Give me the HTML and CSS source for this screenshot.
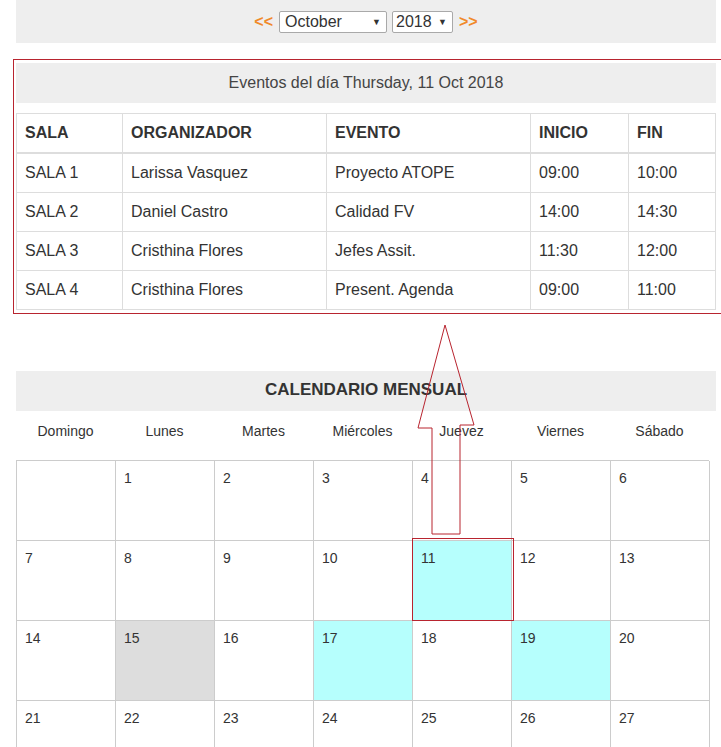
FILE: index.html
```html
<!DOCTYPE html>
<html lang="es">
<head>
<meta charset="utf-8">
<title>Calendario</title>
<link rel="stylesheet" href="styles.css">
</head>
<body>
<div class="page">
  <div class="nav">
    <a class="nav-arrow">&lt;&lt;</a>
    <div class="select month"><span>October</span><span class="caret">▼</span></div>
    <div class="select year"><span>2018</span><span class="caret">▼</span></div>
    <a class="nav-arrow">&gt;&gt;</a>
  </div>

  <section class="events">
    <div class="events-title">Eventos del día Thursday, 11 Oct 2018</div>
    <table class="events-table">
      <thead>
        <tr><th class="c1">SALA</th><th class="c2">ORGANIZADOR</th><th class="c3">EVENTO</th><th class="c4">INICIO</th><th class="c5">FIN</th></tr>
      </thead>
      <tbody>
        <tr><td>SALA 1</td><td>Larissa Vasquez</td><td>Proyecto ATOPE</td><td>09:00</td><td>10:00</td></tr>
        <tr><td>SALA 2</td><td>Daniel Castro</td><td>Calidad FV</td><td>14:00</td><td>14:30</td></tr>
        <tr><td>SALA 3</td><td>Cristhina Flores</td><td>Jefes Assit.</td><td>11:30</td><td>12:00</td></tr>
        <tr><td>SALA 4</td><td>Cristhina Flores</td><td>Present. Agenda</td><td>09:00</td><td>11:00</td></tr>
      </tbody>
    </table>
  </section>

  <section class="calendar">
    <div class="cal-title">CALENDARIO MENSUAL</div>
    <div class="weekdays">
      <div>Domingo</div><div>Lunes</div><div>Martes</div><div>Miércoles</div><div>Juevez</div><div>Viernes</div><div>Sábado</div>
    </div>
    <div class="grid">
      <div class="day"></div><div class="day">1</div><div class="day">2</div><div class="day">3</div><div class="day">4</div><div class="day">5</div><div class="day">6</div>
      <div class="day">7</div><div class="day">8</div><div class="day">9</div><div class="day">10</div><div class="day event">11</div><div class="day">12</div><div class="day">13</div>
      <div class="day">14</div><div class="day today">15</div><div class="day">16</div><div class="day event">17</div><div class="day">18</div><div class="day event">19</div><div class="day">20</div>
      <div class="day">21</div><div class="day">22</div><div class="day">23</div><div class="day">24</div><div class="day">25</div><div class="day">26</div><div class="day">27</div>
    </div>
  </section>
</div>

<div class="highlight-box"></div>
<svg class="annotations" width="721" height="747" viewBox="0 0 721 747" aria-hidden="true">
  <polygon points="445,325 474,425 460,425 460,534 432,534 432,428 418,428" fill="none" stroke="#b8242f" stroke-width="1"/>
  <rect x="412.5" y="538.5" width="101" height="82" fill="none" stroke="#b8242f" stroke-width="1"/>
</svg>
</body>
</html>
```

FILE: styles.css
```css
html, body {
  margin: 0;
  padding: 0;
  overflow: hidden;
}

body {
  font-family: "Liberation Sans", Arial, sans-serif;
  font-size: 16px;
  color: #333;
  background: #fff;
  position: relative;
  width: 721px;
  height: 747px;
  overflow: hidden;
}

.page {
  width: 700px;
  margin-left: 16px;
}

/* Top navigation */
.nav {
  height: 43px;
  background: #eeeeee;
  display: flex;
  align-items: center;
  justify-content: center;
  gap: 5px;
  padding-top: 1px;
  box-sizing: border-box;
}

.nav-arrow {
  color: #f0892a;
  font-weight: bold;
  font-size: 16px;
  padding: 0 1px;
}

.select {
  height: 22px;
  box-sizing: border-box;
  border: 1px solid #a9a9a9;
  border-radius: 2px;
  background: #fff;
  display: flex;
  align-items: center;
  justify-content: space-between;
  padding: 0 5px 0 5px;
  font-size: 16px;
  color: #333;
}

.select.month { width: 108px; }
.select.year { width: 61px; padding-left: 3px; }

.caret {
  font-size: 9px;
  color: #333;
}

/* Events */
.events {
  margin-top: 20px;
}

.events-title {
  height: 40px;
  background: #eeeeee;
  display: flex;
  align-items: center;
  justify-content: center;
  color: #444;
  font-size: 16px;
}

.events-table {
  margin-top: 10px;
  width: 700px;
  border-collapse: collapse;
  border: 1px solid #dddddd;
}

.events-table th,
.events-table td {
  text-align: left;
  padding: 8px 8px;
  line-height: 22px;
  border: 1px solid #dddddd;
  font-size: 16px;
}

.events-table th {
  font-weight: bold;
  border-bottom-width: 2px;
  color: #333;
}

.events-table .c1 { width: 89px; }
.events-table .c2 { width: 187px; }
.events-table .c3 { width: 187px; }
.events-table .c4 { width: 81px; }

/* Calendar */
.calendar {
  margin-top: 61px;
}

.cal-title {
  height: 40px;
  background: #eeeeee;
  display: flex;
  align-items: center;
  justify-content: center;
  font-weight: bold;
  font-size: 17px;
  color: #333;
  padding-bottom: 2px;
  box-sizing: border-box;
}

.weekdays {
  display: grid;
  grid-template-columns: repeat(7, 99px);
  height: 49px;
}

.weekdays div {
  text-align: center;
  font-size: 14px;
  line-height: 16px;
  padding-top: 12px;
  color: #333;
}

.grid {
  display: grid;
  grid-template-columns: repeat(7, 99px);
  grid-auto-rows: 80px;
  border-top: 1px solid #cccccc;
  border-left: 1px solid #cccccc;
  width: 693px;
  box-sizing: border-box;
}

.day {
  border-right: 1px solid #cccccc;
  border-bottom: 1px solid #cccccc;
  padding: 9px 0 0 8px;
  font-size: 14px;
  line-height: 16px;
  color: #333;
}

.day.event {
  background: #b6fffd;
}

.day.today {
  background: #dddddd;
}

/* Annotation overlays */
.highlight-box {
  position: absolute;
  left: 13px;
  top: 59px;
  width: 707px;
  height: 253px;
  border: 1px solid #b8242f;
  border-right: none;
  pointer-events: none;
}

.annotations {
  position: absolute;
  top: 0;
  left: 0;
  pointer-events: none;
}
```
